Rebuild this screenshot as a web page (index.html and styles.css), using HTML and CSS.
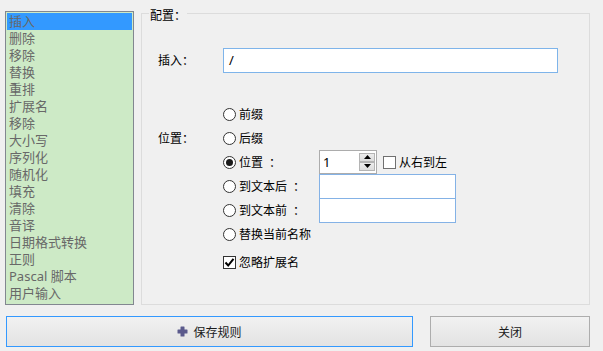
FILE: index.html
```html
<!DOCTYPE html>
<html lang="zh-CN">
<head>
<meta charset="utf-8">
<title>规则配置</title>
<link rel="stylesheet" href="styles.css">
</head>
<body>
<div class="app">
  <div class="top">
    <ul class="rule-list">
      <li class="selected">插入</li>
      <li>删除</li>
      <li>移除</li>
      <li>替换</li>
      <li>重排</li>
      <li>扩展名</li>
      <li>移除</li>
      <li>大小写</li>
      <li>序列化</li>
      <li>随机化</li>
      <li>填充</li>
      <li>清除</li>
      <li>音译</li>
      <li>日期格式转换</li>
      <li>正则</li>
      <li>Pascal 脚本</li>
      <li>用户输入</li>
    </ul>
    <div class="group">
      <span class="group-title">配置<span class="colon">：</span></span>
      <div class="group-body">
        <div class="field-row">
          <span class="label">插入<span class="colon">：</span></span>
          <div class="text-input focus">/</div>
        </div>
        <div class="position-block">
          <span class="label pos-label">位置<span class="colon">：</span></span>
          <div class="options">
            <div class="opt-row"><span class="radio-label"><span class="radio"></span>前缀</span></div>
            <div class="opt-row"><span class="radio-label"><span class="radio"></span>后缀</span></div>
            <div class="opt-row">
              <span class="radio-label"><span class="radio checked"></span>位置<span class="colon">：</span></span>
              <div class="spin">
                <span class="spin-value">1</span>
                <span class="spin-buttons">
                  <span class="spin-btn"><svg width="7" height="4" viewBox="0 0 7 4"><path d="M3.5 0 L7 4 L0 4 Z" fill="#000"/></svg></span>
                  <span class="spin-btn"><svg width="7" height="4" viewBox="0 0 7 4"><path d="M0 0 L7 0 L3.5 4 Z" fill="#000"/></svg></span>
                </span>
              </div>
              <span class="check-label rtl"><span class="checkbox light"></span>从右到左</span>
            </div>
            <div class="opt-row">
              <span class="radio-label"><span class="radio"></span>到文本后<span class="colon">：</span></span>
              <div class="text-box"></div>
            </div>
            <div class="opt-row">
              <span class="radio-label"><span class="radio"></span>到文本前<span class="colon">：</span></span>
              <div class="text-box"></div>
            </div>
            <div class="opt-row"><span class="radio-label"><span class="radio"></span>替换当前名称</span></div>
            <div class="opt-row check-row">
              <span class="check-label"><span class="checkbox checked"><svg width="11" height="11" viewBox="0 0 11 11"><path d="M1.5 5.5 L4.2 8.5 L9.5 1.8" fill="none" stroke="#000" stroke-width="2"/></svg></span>忽略扩展名</span>
            </div>
          </div>
        </div>
      </div>
    </div>
  </div>
  <div class="bottom">
    <button class="btn save"><svg class="plus" width="11" height="11" viewBox="0 0 11 11"><path d="M4 0.5 H7 Q7.5 0.5 7.5 1 V3.5 H10 Q10.5 3.5 10.5 4 V7 Q10.5 7.5 10 7.5 H7.5 V10 Q7.5 10.5 7 10.5 H4 Q3.5 10.5 3.5 10 V7.5 H1 Q0.5 7.5 0.5 7 V4 Q0.5 3.5 1 3.5 H3.5 V1 Q3.5 0.5 4 0.5 Z" fill="#5b5a8c"/></svg>保存规则</button>
    <button class="btn close">关闭</button>
  </div>
</div>
</body>
</html>
```

FILE: styles.css
```css
* { box-sizing: border-box; }

html, body {
  margin: 0;
  padding: 0;
  background: #f0f0f0;
}

body {
  width: 603px;
  height: 351px;
  overflow: hidden;
  font-family: "Noto Sans", "Noto Sans CJK SC", sans-serif;
  font-size: 12px;
  color: #000;
}

.colon {
  font-family: "Noto Sans CJK JP", "Noto Sans CJK TC", sans-serif;
}

.top {
  display: flex;
  align-items: flex-start;
  padding: 11px 0 0 5px;
  gap: 7px;
}

.rule-list {
  list-style: none;
  margin: 0;
  padding: 1px;
  width: 129px;
  height: 294px;
  border: 1px solid #828790;
  background: #cdeac6;
  font-size: 13px;
  color: #686868;
}

.rule-list li {
  height: 17px;
  line-height: 17px;
  padding-left: 2px;
  white-space: nowrap;
}

.rule-list li.selected {
  background: #3399ff;
}

.group {
  position: relative;
  margin-top: 2px;
  width: 449px;
  height: 292px;
  border: 1px solid #dcdcdc;
}

.group-title {
  position: absolute;
  top: -7px;
  left: 7px;
  padding: 0 1px;
  line-height: 15px;
  background: #f0f0f0;
}

.group-body {
  padding: 34px 0 0 16px;
}

.field-row {
  display: flex;
  align-items: center;
  height: 25px;
}

.label {
  width: 65px;
  flex: none;
  line-height: 24px;
}

.text-input {
  width: 335px;
  height: 25px;
  border: 1px solid #7eb4ea;
  background: #fff;
  padding-left: 5px;
  font-size: 13px;
  line-height: 22px;
}

.position-block {
  display: flex;
  margin-top: 29px;
}

.pos-label {
  margin-top: 24px;
}

.options {
  display: flex;
  flex-direction: column;
}

.opt-row {
  display: flex;
  align-items: center;
  height: 24px;
}

.radio-label {
  display: flex;
  align-items: center;
  width: 96px;
  flex: none;
  gap: 3px;
  white-space: nowrap;
}

.radio {
  width: 13px;
  height: 13px;
  border: 1px solid #333;
  border-radius: 50%;
  background: #fff;
  flex: none;
  display: flex;
  align-items: center;
  justify-content: center;
}

.radio.checked::after {
  content: "";
  width: 7px;
  height: 7px;
  border-radius: 50%;
  background: #1a1a1a;
}

.spin {
  display: flex;
  width: 58px;
  height: 24px;
  border: 1px solid #acacac;
  background: #fff;
  padding: 1px;
  margin-top: -1px;
}

.spin-value {
  flex: 1;
  padding-left: 2px;
  font-size: 13px;
  line-height: 21px;
}

.spin-buttons {
  display: flex;
  flex-direction: column;
  justify-content: space-between;
  width: 16px;
  padding: 1px 0;
}

.spin-btn {
  height: 10px;
  border: 1px solid #b4b4b4;
  background: linear-gradient(#ececec, #dcdcdc);
  display: flex;
  align-items: center;
  justify-content: center;
}

.check-label {
  display: flex;
  align-items: center;
  gap: 3px;
  white-space: nowrap;
}

.rtl {
  margin-left: 6px;
}

.checkbox {
  width: 13px;
  height: 13px;
  border: 1px solid #333;
  background: #fff;
  flex: none;
  display: flex;
  align-items: center;
  justify-content: center;
}

.checkbox.light {
  border-color: #707070;
}

.text-box {
  align-self: flex-start;
  width: 137px;
  height: 25px;
  border: 1px solid #84b2e6;
  background: #fff;
}

.check-row {
  margin-top: 4px;
}

.bottom {
  display: flex;
  padding: 11px 0 0 6px;
  gap: 17px;
}

.btn {
  height: 31px;
  margin: 0;
  padding: 0;
  font-family: "Noto Sans", "Noto Sans CJK SC", sans-serif;
  font-size: 12px;
  color: #1a1a1a;
  background: linear-gradient(#f1f1f1, #e3e3e3);
  display: flex;
  align-items: center;
  justify-content: center;
  gap: 5px;
}

.save {
  width: 407px;
  border: 1px solid #3399ff;
}

.close {
  width: 160px;
  border: 1px solid #adadad;
}

.plus {
  flex: none;
}
```
